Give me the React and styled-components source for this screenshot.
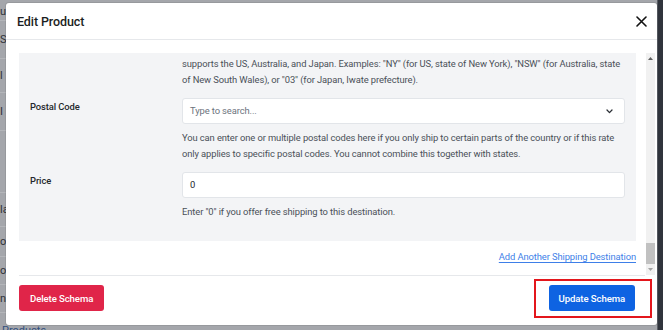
import React, { useLayoutEffect, useRef } from "react";
import styled, { createGlobalStyle } from "styled-components";

const FONT = `Roboto, "Open Sans", "Liberation Sans", sans-serif`;

const Global = createGlobalStyle`
  html, body { margin: 0; padding: 0; }
  body { font-family: ${FONT}; width: 663px; height: 330px; overflow: hidden; }
  * { box-sizing: border-box; }
`;

const Page = styled.div`
  position: relative;
  width: 663px;
  height: 330px;
  overflow: hidden;
  display: grid;
  grid-template-columns: 1fr 6px;
  background: #a4a6ab;
`;

const PageMain = styled.div`
  display: flex;
  flex-direction: column;
  padding-top: 2px;
  overflow: hidden;
`;

const NavItem = styled.div`
  height: ${(p) => p.$h}px;
  width: 6px;
  overflow: hidden;
  border-bottom: 1px solid #b3b5b9;
  font-size: 11px;
  color: #2f3238;
  display: flex;
  align-items: center;
  white-space: nowrap;
`;

const PageFoot = styled.div`
  margin-top: auto;
  font-size: 11px;
  color: #33507f;
  padding-left: 2px;
  line-height: 14px;
  height: 6px;
`;

const PageSide = styled.div`
  background: #30343c;
  border-left: 1px solid #5b5f66;
`;

const Modal = styled.div`
  position: absolute;
  left: 6px;
  top: 3px;
  width: 651px;
  height: 322px;
  background: #fff;
  border-radius: 3px;
  display: flex;
  flex-direction: column;
  box-shadow: 0 0 0 1px rgba(0, 0, 0, 0.08);
`;

const Header = styled.div`
  height: 37px;
  flex: none;
  display: flex;
  align-items: center;
  justify-content: space-between;
  padding: 0 9px 0 11px;
  border-bottom: 1px solid #e6e8eb;
`;

const Title = styled.h5`
  margin: 0;
  font-size: 12.5px;
  font-weight: 500;
  color: #1b1e22;
  letter-spacing: -0.1px;
`;

const CloseBtn = styled.button`
  border: 0;
  background: none;
  padding: 0;
  width: 13px;
  height: 13px;
  display: flex;
  align-items: center;
  justify-content: center;
  cursor: pointer;
`;

const BodyWrap = styled.div`
  flex: none;
  padding: 13px 2px 0 13px;
`;

const ScrollArea = styled.div`
  height: 222px;
  display: flex;
`;

const Viewport = styled.div`
  flex: 1;
  min-width: 0;
  overflow: hidden;
`;

const ScrollBar = styled.div`
  width: 9px;
  flex: none;
  background: #f1f1f1;
  display: flex;
  flex-direction: column;
`;

const ScrollButton = styled.div`
  height: 11px;
  flex: none;
  display: flex;
  align-items: center;
  justify-content: center;
`;

const ScrollTrack = styled.div`
  flex: 1;
  display: flex;
  flex-direction: column;
  justify-content: flex-end;
`;

const Thumb = styled.div`
  height: 21px;
  background: #c1c1c1;
`;

const Content = styled.div`
  padding-right: 10px;
  font-size: 9.4px;
  letter-spacing: -0.1px;
  line-height: 16px;
  color: #212529;
`;

const SectionTitle = styled.div`
  font-size: 11px;
  font-weight: 500;
  color: #1b1e22;
  margin: 14px 0 10px;
`;

const Card = styled.div`
  background: #f3f4f6;
  padding: 11px 11px 11px;
  margin-bottom: ${(p) => (p.$last ? 0 : 14)}px;
`;

const Row = styled.div`
  display: grid;
  grid-template-columns: 152px 1fr;
  margin-bottom: 10px;
  ${(p) => p.$plain && `padding: 0 11px;`}
`;

const Label = styled.label`
  padding-top: 1px;
  font-weight: 500;
  color: #25282c;
`;

const Field = styled.div`
  min-width: 0;
`;

const Input = styled.div`
  height: 26px;
  background: #fff;
  border: 1px solid #e2e5e9;
  border-radius: 3px;
  display: flex;
  align-items: center;
  justify-content: space-between;
  padding: 0 11px 0 7px;
  color: ${(p) => (p.$placeholder ? "#6c737d" : "#212529")};
`;

const TextArea = styled(Input)`
  height: 60px;
  align-items: flex-start;
  padding-top: 4px;
`;

const Help = styled.div`
  margin-top: 6px;
  color: #4a5058;
`;

const LinkRow = styled.div`
  display: flex;
  justify-content: flex-end;
  padding: 8px 0 10px;
`;

const Link = styled.a`
  color: #3e7fe8;
  text-decoration: underline;
  text-underline-offset: 1.5px;
  cursor: pointer;
`;

const Footer = styled.div`
  flex: none;
  margin: 0 12px 0 13px;
  border-top: 1px solid #e6e8eb;
  padding: 9px 10px 0 0;
  display: flex;
  justify-content: space-between;
  align-items: center;
`;

const Button = styled.button`
  height: 26px;
  border: 0;
  border-radius: 3px;
  padding: 0 ${(p) => p.$px}px;
  font-family: ${FONT};
  font-size: 9.6px;
  letter-spacing: -0.1px;
  font-weight: 500;
  color: #fff;
  background: ${(p) => (p.$variant === "danger" ? "#e02549" : "#0e63e2")};
  cursor: pointer;
`;

const HighlightWrap = styled.span`
  position: relative;
  display: inline-flex;
`;

const Highlight = styled.span`
  position: absolute;
  inset: -6px -17px -7px -15px;
  border: 2px solid #e3161c;
  pointer-events: none;
`;

const Chevron = () => (
  <svg width="7" height="5" viewBox="0 0 7 5" fill="none">
    <path d="M1 1 L3.5 3.6 L6 1" stroke="#2b2f35" strokeWidth="1.3" strokeLinecap="round" strokeLinejoin="round" />
  </svg>
);

const CloseIcon = () => (
  <svg width="11" height="11" viewBox="0 0 11 11">
    <path d="M1 1 L10 10 M10 1 L1 10" stroke="#111" strokeWidth="1.6" strokeLinecap="round" />
  </svg>
);

const Arrow = ({ up, color }) => (
  <svg width="5" height="3" viewBox="0 0 5 3">
    <path d={up ? "M0 3 L2.5 0 L5 3Z" : "M0 0 L2.5 3 L5 0Z"} fill={color} />
  </svg>
);

const stateHelp = (
  <>
    You can enter one or multiple states here if you only ship to specific regions (optional). This currently only
    <br />
    supports the US, Australia, and Japan. Examples: "NY" (for US, state of New York), "NSW" (for Australia, state
    <br />
    of New South Wales), or "03" (for Japan, Iwate prefecture).
  </>
);

const postalHelp =
  "You can enter one or multiple postal codes here if you only ship to certain parts of the country or if this rate only applies to specific postal codes. You cannot combine this together with states.";

const generalFields = [
  { label: "Schema Type", value: "Product", select: true },
  { label: "Name", value: "Classic Cotton T-Shirt" },
  { label: "Description", value: "Soft, breathable cotton t-shirt available in multiple colours.", area: true },
  { label: "SKU", value: "TS-CLASSIC-001" },
  { label: "Brand", value: "Northwind" },
  { label: "GTIN", value: "0123456789012", help: "Global Trade Item Number of the product." },
  { label: "Price", value: "24.99" },
  { label: "Currency", value: "USD", select: true },
  { label: "Availability", value: "In Stock", select: true },
  { label: "Condition", value: "New", select: true },
];

const Destination = ({ country, price, last }) => (
  <Card $last={last}>
    <Row>
      <Label>Country</Label>
      <Field>
        <Input>
          {country}
          <Chevron />
        </Input>
      </Field>
    </Row>
    <Row>
      <Label>State</Label>
      <Field>
        <Input $placeholder>
          Type to search...
          <Chevron />
        </Input>
        <Help>{stateHelp}</Help>
      </Field>
    </Row>
    <Row>
      <Label>Postal Code</Label>
      <Field>
        <Input $placeholder>
          Type to search...
          <Chevron />
        </Input>
        <Help>{postalHelp}</Help>
      </Field>
    </Row>
    <Row>
      <Label>Price</Label>
      <Field>
        <Input>{price}</Input>
        <Help>Enter "0" if you offer free shipping to this destination.</Help>
      </Field>
    </Row>
  </Card>
);

export default function App() {
  const scrollRef = useRef(null);
  useLayoutEffect(() => {
    const el = scrollRef.current;
    if (el) el.scrollTop = el.scrollHeight;
  }, []);

  return (
    <>
      <Global />
      <Page>
        <PageMain>
          <NavItem $h={19}>ur</NavItem>
          <NavItem $h={38}>Se</NavItem>
          <NavItem $h={34}>l</NavItem>
          <NavItem $h={38}>I</NavItem>
          <NavItem $h={62}> </NavItem>
          <NavItem $h={34}>la</NavItem>
          <NavItem $h={30}>ol</NavItem>
          <NavItem $h={28}>or</NavItem>
          <NavItem $h={28}>ng</NavItem>
          <PageFoot>Products</PageFoot>
        </PageMain>
        <PageSide />
        <Modal role="dialog" aria-label="Edit Product">
          <Header>
            <Title>Edit Product</Title>
            <CloseBtn aria-label="Close">
              <CloseIcon />
            </CloseBtn>
          </Header>
          <BodyWrap>
            <ScrollArea>
              <Viewport ref={scrollRef}>
                <Content>
                  {generalFields.map((f) => (
                    <Row $plain key={f.label}>
                      <Label>{f.label}</Label>
                      <Field>
                        {f.area ? (
                          <TextArea>{f.value}</TextArea>
                        ) : (
                          <Input>
                            {f.value}
                            {f.select && <Chevron />}
                          </Input>
                        )}
                        {f.help && <Help>{f.help}</Help>}
                      </Field>
                    </Row>
                  ))}
                  <SectionTitle>Shipping Destinations</SectionTitle>
                  <Destination country="United States" price="4.99" />
                  <Destination country="Australia" price="9.99" />
                  <Destination country="Japan" price="0" last />
                  <LinkRow>
                    <Link>Add Another Shipping Destination</Link>
                  </LinkRow>
                </Content>
              </Viewport>
              <ScrollBar aria-hidden="true">
                <ScrollButton>
                  <Arrow up color="#5f5f5f" />
                </ScrollButton>
                <ScrollTrack>
                  <Thumb />
                </ScrollTrack>
                <ScrollButton>
                  <Arrow color="#a3a3a3" />
                </ScrollButton>
              </ScrollBar>
            </ScrollArea>
          </BodyWrap>
          <Footer>
            <Button $variant="danger" $px={11}>Delete Schema</Button>
            <HighlightWrap>
              <Button $variant="primary" $px={10}>Update Schema</Button>
              <Highlight />
            </HighlightWrap>
          </Footer>
        </Modal>
      </Page>
    </>
  );
}
